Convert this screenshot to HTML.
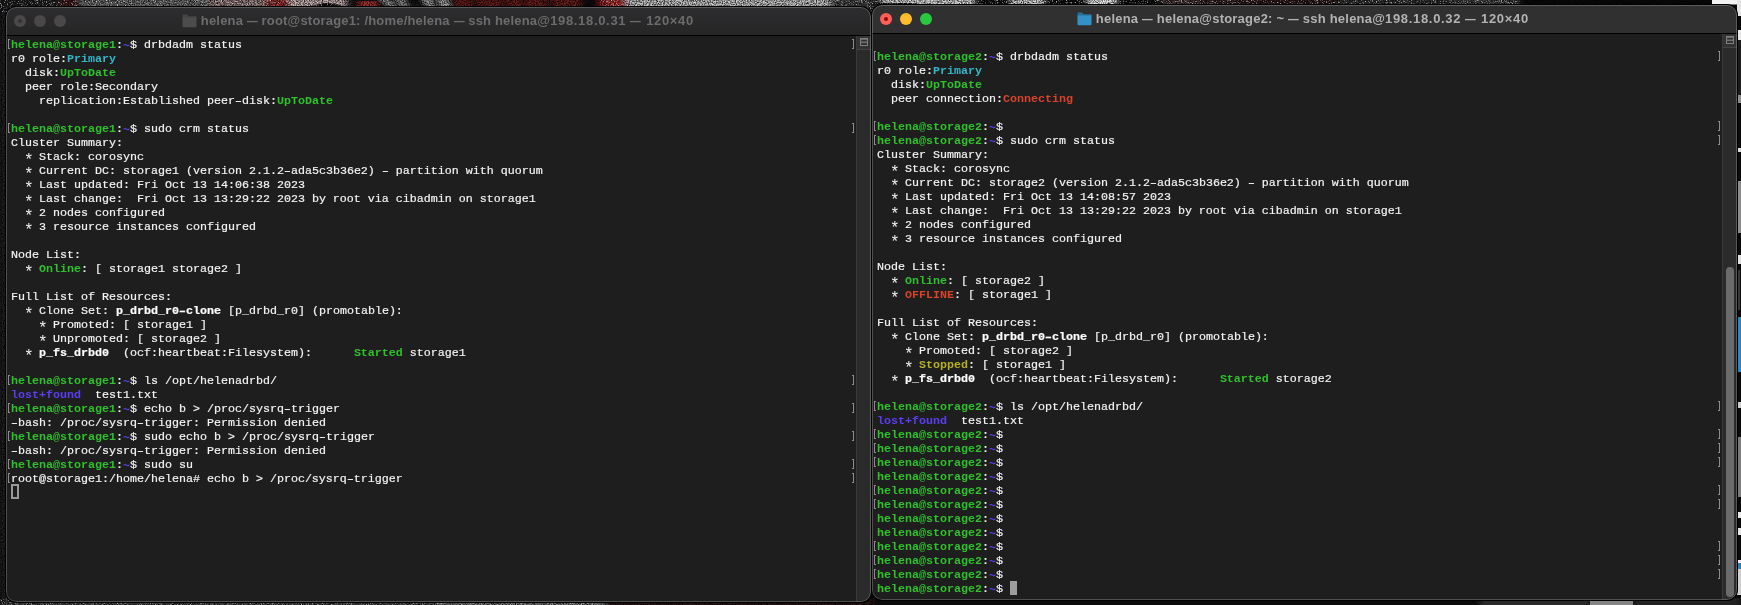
<!DOCTYPE html>
<html lang="en"><head><meta charset="utf-8"><title>Terminal — storage1 / storage2</title>
<style>
html,body{margin:0;padding:0}
body{width:1741px;height:605px;overflow:hidden;background:#0c0c0c;position:relative;font-family:"Liberation Sans",sans-serif}
#bg{position:absolute;left:0;top:0}
.win{position:absolute;width:865px;height:595px;border-radius:10px;background:#1e1e1e;overflow:hidden;box-shadow:0 0 0 1px #000}
.win::after{content:"";position:absolute;left:0;top:0;right:0;bottom:0;border-radius:10px;border:1px solid rgba(255,255,255,.22);pointer-events:none;box-sizing:border-box}
.w1{left:6px;top:7px}
.w2{left:872px;top:5px}
.tb{will-change:transform;position:absolute;left:0;top:0;width:100%;height:28px;border-bottom:1px solid #000}
.w1 .tb{background:linear-gradient(#2d2c2e,#262627)}
.w2 .tb{background:#303030}
.tl{position:absolute;top:8px;width:12px;height:12px;border-radius:50%;background:#4a4849}
.t1{left:8px}.t2{left:28px}.t3{left:48px}
.tl b{position:absolute;left:4px;top:4px;width:4px;height:4px;border-radius:50%;background:#353334}
.w2 .t1{background:#fe5f57}.w2 .t2{background:#febc2e}.w2 .t3{background:#28c840}
.w2 .t1 b{background:#8c0a05}
.ttl{position:absolute;top:0;height:28px;white-space:nowrap}
.w1 .ttl{left:176px}
.w2 .ttl{left:205px}
.fold{position:absolute;left:0;top:7px}
.w1 .f1{fill:#454546}.w1 .f2{fill:#4c4c4d}
.w2 .f1{fill:#256f9c}.w2 .f2{fill:#3391c5}
.tt{position:absolute;left:18.8px;top:0;line-height:28px;font-size:13px;font-weight:bold;white-space:pre}
.w1 .tt{color:#6c6c6d;letter-spacing:.185px}
.w2 .tt{color:#b3b3b3;letter-spacing:.213px}
.term{will-change:transform;position:absolute;left:0;top:29px;width:865px;height:566px;font-family:"Liberation Mono","DejaVu Sans Mono",monospace;font-size:11.667px;font-weight:normal;color:#f4f4f4}
.ln{position:absolute;left:5.1px;height:14px;line-height:14px;white-space:pre;margin-top:1px}
.w{-webkit-text-stroke:.18px #f4f4f4}
.g,.c,.b,.r,.y,.bd{font-weight:bold}
.g{color:#2fc02c}.c{color:#2fb7c9}.b{color:#5c3df6}.r{color:#d9432a}.y{color:#b6b024}
.bd{color:#fff;-webkit-text-stroke:.2px #fff}
.mk{position:absolute;width:1px;height:8px;border:1px solid #8c8c8c;box-sizing:content-box}
.mk.l{left:2px;border-right:none}
.mk.r{left:846px;border-left:none}
.cur{position:absolute;width:7px;height:14px;box-sizing:border-box}
.cur.hollow{border:2px solid #999;width:8px;height:15px}
.cur.solid{background:#9d9d9d}
.sb{position:absolute;right:0;top:0;width:15px;height:566px;background:#2b2b2b;border-left:1px solid #3a3a3a;box-sizing:border-box}
.sp{position:absolute;left:0;top:0;width:14px;height:13px;border-bottom:1px solid #444;background:#333}
.sp svg{position:absolute;left:3px;top:2px}
.th{position:absolute;left:3px;top:233px;width:8px;height:330px;border-radius:4px;background:#6b6b6b}
.em{display:inline-block;transform:scaleX(.82);transform-origin:0 50%;margin-right:-2.3px}
.tn{letter-spacing:.67px}
.as{display:inline-block;width:7px;height:10px;line-height:10px;font-size:16px;position:relative;top:4.7px;left:-1px;vertical-align:baseline;-webkit-text-stroke:0}
.hy{display:inline-block;transform:scaleX(1.55)}
.bt{position:relative;top:1px}

</style></head>
<body>
<svg id="bg" width="1741" height="605" viewBox="0 0 1741 605">
<defs>
<filter id="nk" x="0" y="0" width="100%" height="100%"><feTurbulence type="fractalNoise" baseFrequency="0.85" numOctaves="2" seed="4"/><feColorMatrix type="matrix" values="0 0 0 0 0  0 0 0 0 0  0 0 0 0 0  2.2 0 0 0 -0.8"/></filter>
<filter id="nw" x="0" y="0" width="100%" height="100%"><feTurbulence type="fractalNoise" baseFrequency="0.8" numOctaves="2" seed="11"/><feColorMatrix type="matrix" values="0 0 0 0 1  0 0 0 0 1  0 0 0 0 1  0 2.4 0 0 -1.3"/></filter>
<filter id="bl" x="-2%" y="-50%" width="104%" height="200%"><feGaussianBlur stdDeviation="3 0.6"/></filter>
</defs>
<rect width="1741" height="605" fill="#0a0a0a"/>
<g filter="url(#bl)">
<rect x="0" y="0" width="60" height="12" fill="#1b1b1b"/>
<rect x="60" y="0" width="20" height="12" fill="#3c1414"/>
<rect x="80" y="0" width="130" height="12" fill="#626262"/>
<rect x="210" y="0" width="55" height="12" fill="#8e7474"/>
<rect x="265" y="0" width="25" height="12" fill="#8a2222"/>
<rect x="290" y="0" width="55" height="12" fill="#c4acac"/>
<ellipse cx="327" cy="8" rx="17" ry="5" fill="#0a0a0a"/>
<rect x="345" y="0" width="110" height="12" fill="#141414"/>
<rect x="360" y="1" width="16" height="6" fill="#b03030"/>
<path d="M383 0l8 7h3l-6 -7zM398 0l5 7h3l-4 -7zM425 0l4 7h4l-3 -7zM440 0l3 7h5l-2 -7z" fill="#d8d8d8"/>
<rect x="455" y="0" width="125" height="12" fill="#6a1a1c"/>
<path d="M470 0l4 7h5l-3 -7zM500 0l5 7h4l-4 -7zM520 0l3 7h3l-2 -7zM545 0l3 7h6l-2 -7z" fill="#0c0c0c"/>
<rect x="580" y="0" width="20" height="12" fill="#0c0c0c"/>
<rect x="600" y="0" width="26" height="12" fill="#a42424"/>
<rect x="626" y="0" width="204" height="12" fill="#bcbcbc"/>
<rect x="830" y="0" width="44" height="12" fill="#3a3a3a"/>
<rect x="880" y="0" width="35" height="3" fill="#c8c8c8"/>
<rect x="915" y="0" width="60" height="4" fill="#d4d4d4"/>
<rect x="1010" y="0" width="35" height="4" fill="#d0d0d0"/>
<rect x="1087" y="0" width="30" height="4" fill="#ececec"/>
<rect x="1160" y="0" width="40" height="5" fill="#3a2c2c"/>
<rect x="1200" y="0" width="140" height="5" fill="#2a1212"/>
<rect x="1340" y="0" width="110" height="5" fill="#2c2c2c"/>
<rect x="1450" y="0" width="70" height="5" fill="#383838"/>
<rect x="0" y="12" width="8" height="593" fill="#272727"/>
<rect x="0" y="598" width="435" height="7" fill="#3e3e3e"/>
<rect x="435" y="598" width="170" height="7" fill="#6a6a6a"/>
<rect x="605" y="598" width="268" height="7" fill="#2c1416"/>
<rect x="1480" y="598" width="110" height="7" fill="#2a2a2a"/>
<rect x="1633" y="598" width="108" height="7" fill="#242424"/>
</g>
<rect x="0" y="0" width="1741" height="12" filter="url(#nk)"/>
<rect x="0" y="12" width="8" height="593" filter="url(#nk)"/>
<rect x="0" y="597" width="873" height="8" filter="url(#nk)"/>
<rect x="0" y="0" width="345" height="12" filter="url(#nw)"/>
<rect x="600" y="0" width="920" height="12" filter="url(#nw)"/>
<rect x="0" y="597" width="605" height="8" filter="url(#nw)"/>
<rect x="1590" y="600" width="43" height="5" fill="#858585"/>
<rect x="1712" y="0" width="29" height="4.5" fill="#f2f2f2"/>
<g>
<rect x="1737" y="0" width="4" height="16" fill="#e4e4e4"/>
<rect x="1738" y="30" width="3" height="10" fill="#e6e6e6"/>
<rect x="1737" y="40" width="4" height="55" fill="#1c1c1c"/>
<rect x="1737" y="95" width="4" height="8" fill="#8e8e8e"/>
<rect x="1738" y="148" width="3" height="4" fill="#ddd"/>
<rect x="1737" y="181" width="4" height="52" fill="#8c8c8c"/>
<rect x="1738" y="255" width="3" height="9" fill="#e0e0e0"/>
<rect x="1738" y="270" width="2" height="40" fill="#3a3a3a"/>
<rect x="1737" y="317" width="4" height="55" fill="#2a86c4"/>
<rect x="1738" y="402" width="3" height="6" fill="#ccc"/>
<rect x="1737" y="437" width="4" height="60" fill="#7c7c7c"/>
<rect x="1738" y="512" width="3" height="6" fill="#e8e8e8"/>
<rect x="1738" y="528" width="3" height="7" fill="#e8e8e8"/>
<rect x="1737" y="560" width="4" height="3" fill="#f0f0f0"/>
<rect x="1737" y="563" width="4" height="6" fill="#2a7fc0"/>
<rect x="1737" y="569" width="4" height="26" fill="#cfcfcf"/>
</g>
</svg>

<div class="win w1">
<div class="tb"><span class="tl t1"><b></b></span><span class="tl t2"></span><span class="tl t3"></span>
<div class="ttl"><svg class="fold" width="15" height="14" viewBox="0 0 15 14"><path class="f1" d="M0.5 1.6 Q0.5 0.6 1.5 0.6 H5 L6.6 2.2 H13.5 Q14.5 2.2 14.5 3.2 V5 H0.5 Z"/><path class="f2" d="M0.5 3.6 H14.5 V12.2 Q14.5 13.2 13.5 13.2 H1.5 Q0.5 13.2 0.5 12.2 Z"/></svg><span class="tt"><span class="ta">helena <span class="em">—</span> root@storage1: /home/helena <span class="em">—</span> ssh helena@</span><span class="tn">198.18.0.31 <span class="em">—</span> 120×40</span></span></div></div>
<div class="term">
<div class="ln" style="top:1px"><span class="g">helena@storage1</span><span class="w">:</span><span class="b bt">~</span><span class="w">$ drbdadm status</span></div>
<div class="ln" style="top:15px"><span class="w">r0 role:</span><span class="c">Primary</span></div>
<div class="ln" style="top:29px"><span class="w">  disk:</span><span class="g">UpToDate</span></div>
<div class="ln" style="top:43px"><span class="w">  peer role:Secondary</span></div>
<div class="ln" style="top:57px"><span class="w">    replication:Established peer<span class="hy">-</span>disk:</span><span class="g">UpToDate</span></div>
<div class="ln" style="top:85px"><span class="g">helena@storage1</span><span class="w">:</span><span class="b bt">~</span><span class="w">$ sudo crm status</span></div>
<div class="ln" style="top:99px"><span class="w">Cluster Summary:</span></div>
<div class="ln" style="top:113px"><span class="w">  <span class="as">*</span> Stack: corosync</span></div>
<div class="ln" style="top:127px"><span class="w">  <span class="as">*</span> Current DC: storage1 (version 2.1.2<span class="hy">-</span>ada5c3b36e2) <span class="hy">-</span> partition with quorum</span></div>
<div class="ln" style="top:141px"><span class="w">  <span class="as">*</span> Last updated: Fri Oct 13 14:06:38 2023</span></div>
<div class="ln" style="top:155px"><span class="w">  <span class="as">*</span> Last change:  Fri Oct 13 13:29:22 2023 by root via cibadmin on storage1</span></div>
<div class="ln" style="top:169px"><span class="w">  <span class="as">*</span> 2 nodes configured</span></div>
<div class="ln" style="top:183px"><span class="w">  <span class="as">*</span> 3 resource instances configured</span></div>
<div class="ln" style="top:211px"><span class="w">Node List:</span></div>
<div class="ln" style="top:225px"><span class="w">  <span class="as">*</span> </span><span class="g">Online</span><span class="w">: [ storage1 storage2 ]</span></div>
<div class="ln" style="top:253px"><span class="w">Full List of Resources:</span></div>
<div class="ln" style="top:267px"><span class="w">  <span class="as">*</span> Clone Set: </span><span class="bd">p_drbd_r0<span class="hy">-</span>clone</span><span class="w"> [p_drbd_r0] (promotable):</span></div>
<div class="ln" style="top:281px"><span class="w">    <span class="as">*</span> Promoted: [ storage1 ]</span></div>
<div class="ln" style="top:295px"><span class="w">    <span class="as">*</span> Unpromoted: [ storage2 ]</span></div>
<div class="ln" style="top:309px"><span class="w">  <span class="as">*</span> </span><span class="bd">p_fs_drbd0</span><span class="w">  (ocf:heartbeat:Filesystem):      </span><span class="g">Started</span><span class="w"> storage1</span></div>
<div class="ln" style="top:337px"><span class="g">helena@storage1</span><span class="w">:</span><span class="b bt">~</span><span class="w">$ ls /opt/helenadrbd/</span></div>
<div class="ln" style="top:351px"><span class="b">lost+found</span><span class="w">  test1.txt</span></div>
<div class="ln" style="top:365px"><span class="g">helena@storage1</span><span class="w">:</span><span class="b bt">~</span><span class="w">$ echo b &gt; /proc/sysrq<span class="hy">-</span>trigger</span></div>
<div class="ln" style="top:379px"><span class="w"><span class="hy">-</span>bash: /proc/sysrq<span class="hy">-</span>trigger: Permission denied</span></div>
<div class="ln" style="top:393px"><span class="g">helena@storage1</span><span class="w">:</span><span class="b bt">~</span><span class="w">$ sudo echo b &gt; /proc/sysrq<span class="hy">-</span>trigger</span></div>
<div class="ln" style="top:407px"><span class="w"><span class="hy">-</span>bash: /proc/sysrq<span class="hy">-</span>trigger: Permission denied</span></div>
<div class="ln" style="top:421px"><span class="g">helena@storage1</span><span class="w">:</span><span class="b bt">~</span><span class="w">$ sudo su</span></div>
<div class="ln" style="top:435px"><span class="w">root@storage1:/home/helena# echo b &gt; /proc/sysrq<span class="hy">-</span>trigger</span></div>
<i class="mk l" style="top:3px"></i><i class="mk r" style="top:3px"></i>
<i class="mk l" style="top:87px"></i><i class="mk r" style="top:87px"></i>
<i class="mk l" style="top:339px"></i><i class="mk r" style="top:339px"></i>
<i class="mk l" style="top:367px"></i><i class="mk r" style="top:367px"></i>
<i class="mk l" style="top:395px"></i><i class="mk r" style="top:395px"></i>
<i class="mk l" style="top:423px"></i><i class="mk r" style="top:423px"></i>
<i class="mk l" style="top:437px"></i><i class="mk r" style="top:437px"></i>
<div class="cur hollow" style="left:5px;top:448px"></div>
<div class="sb"><div class="sp"><svg width="8" height="8" viewBox="0 0 8 8"><rect x="0.5" y="0.5" width="7" height="7" fill="none" stroke="#808080"/><rect x="0" y="0" width="8" height="1.7" fill="#808080"/><rect x="0" y="3.6" width="8" height="1.2" fill="#808080"/></svg></div></div>
</div>
</div>
<div class="win w2">
<div class="tb"><span class="tl t1"><b></b></span><span class="tl t2"></span><span class="tl t3"></span>
<div class="ttl"><svg class="fold" width="15" height="14" viewBox="0 0 15 14"><path class="f1" d="M0.5 1.6 Q0.5 0.6 1.5 0.6 H5 L6.6 2.2 H13.5 Q14.5 2.2 14.5 3.2 V5 H0.5 Z"/><path class="f2" d="M0.5 3.6 H14.5 V12.2 Q14.5 13.2 13.5 13.2 H1.5 Q0.5 13.2 0.5 12.2 Z"/></svg><span class="tt"><span class="ta">helena <span class="em">—</span> helena@storage2: ~ <span class="em">—</span> ssh helena@</span><span class="tn">198.18.0.32 <span class="em">—</span> 120×40</span></span></div></div>
<div class="term">
<div class="ln" style="top:15px"><span class="g">helena@storage2</span><span class="w">:</span><span class="b bt">~</span><span class="w">$ drbdadm status</span></div>
<div class="ln" style="top:29px"><span class="w">r0 role:</span><span class="c">Primary</span></div>
<div class="ln" style="top:43px"><span class="w">  disk:</span><span class="g">UpToDate</span></div>
<div class="ln" style="top:57px"><span class="w">  peer connection:</span><span class="r">Connecting</span></div>
<div class="ln" style="top:85px"><span class="g">helena@storage2</span><span class="w">:</span><span class="b bt">~</span><span class="w">$ </span></div>
<div class="ln" style="top:99px"><span class="g">helena@storage2</span><span class="w">:</span><span class="b bt">~</span><span class="w">$ sudo crm status</span></div>
<div class="ln" style="top:113px"><span class="w">Cluster Summary:</span></div>
<div class="ln" style="top:127px"><span class="w">  <span class="as">*</span> Stack: corosync</span></div>
<div class="ln" style="top:141px"><span class="w">  <span class="as">*</span> Current DC: storage2 (version 2.1.2<span class="hy">-</span>ada5c3b36e2) <span class="hy">-</span> partition with quorum</span></div>
<div class="ln" style="top:155px"><span class="w">  <span class="as">*</span> Last updated: Fri Oct 13 14:08:57 2023</span></div>
<div class="ln" style="top:169px"><span class="w">  <span class="as">*</span> Last change:  Fri Oct 13 13:29:22 2023 by root via cibadmin on storage1</span></div>
<div class="ln" style="top:183px"><span class="w">  <span class="as">*</span> 2 nodes configured</span></div>
<div class="ln" style="top:197px"><span class="w">  <span class="as">*</span> 3 resource instances configured</span></div>
<div class="ln" style="top:225px"><span class="w">Node List:</span></div>
<div class="ln" style="top:239px"><span class="w">  <span class="as">*</span> </span><span class="g">Online</span><span class="w">: [ storage2 ]</span></div>
<div class="ln" style="top:253px"><span class="w">  <span class="as">*</span> </span><span class="r">OFFLINE</span><span class="w">: [ storage1 ]</span></div>
<div class="ln" style="top:281px"><span class="w">Full List of Resources:</span></div>
<div class="ln" style="top:295px"><span class="w">  <span class="as">*</span> Clone Set: </span><span class="bd">p_drbd_r0<span class="hy">-</span>clone</span><span class="w"> [p_drbd_r0] (promotable):</span></div>
<div class="ln" style="top:309px"><span class="w">    <span class="as">*</span> Promoted: [ storage2 ]</span></div>
<div class="ln" style="top:323px"><span class="w">    <span class="as">*</span> </span><span class="y">Stopped</span><span class="w">: [ storage1 ]</span></div>
<div class="ln" style="top:337px"><span class="w">  <span class="as">*</span> </span><span class="bd">p_fs_drbd0</span><span class="w">  (ocf:heartbeat:Filesystem):      </span><span class="g">Started</span><span class="w"> storage2</span></div>
<div class="ln" style="top:365px"><span class="g">helena@storage2</span><span class="w">:</span><span class="b bt">~</span><span class="w">$ ls /opt/helenadrbd/</span></div>
<div class="ln" style="top:379px"><span class="b">lost+found</span><span class="w">  test1.txt</span></div>
<div class="ln" style="top:393px"><span class="g">helena@storage2</span><span class="w">:</span><span class="b bt">~</span><span class="w">$ </span></div>
<div class="ln" style="top:407px"><span class="g">helena@storage2</span><span class="w">:</span><span class="b bt">~</span><span class="w">$ </span></div>
<div class="ln" style="top:421px"><span class="g">helena@storage2</span><span class="w">:</span><span class="b bt">~</span><span class="w">$ </span></div>
<div class="ln" style="top:435px"><span class="g">helena@storage2</span><span class="w">:</span><span class="b bt">~</span><span class="w">$ </span></div>
<div class="ln" style="top:449px"><span class="g">helena@storage2</span><span class="w">:</span><span class="b bt">~</span><span class="w">$ </span></div>
<div class="ln" style="top:463px"><span class="g">helena@storage2</span><span class="w">:</span><span class="b bt">~</span><span class="w">$ </span></div>
<div class="ln" style="top:477px"><span class="g">helena@storage2</span><span class="w">:</span><span class="b bt">~</span><span class="w">$ </span></div>
<div class="ln" style="top:491px"><span class="g">helena@storage2</span><span class="w">:</span><span class="b bt">~</span><span class="w">$ </span></div>
<div class="ln" style="top:505px"><span class="g">helena@storage2</span><span class="w">:</span><span class="b bt">~</span><span class="w">$ </span></div>
<div class="ln" style="top:519px"><span class="g">helena@storage2</span><span class="w">:</span><span class="b bt">~</span><span class="w">$ </span></div>
<div class="ln" style="top:533px"><span class="g">helena@storage2</span><span class="w">:</span><span class="b bt">~</span><span class="w">$ </span></div>
<div class="ln" style="top:547px"><span class="g">helena@storage2</span><span class="w">:</span><span class="b bt">~</span><span class="w">$ </span></div>
<i class="mk l" style="top:17px"></i><i class="mk r" style="top:17px"></i>
<i class="mk l" style="top:87px"></i><i class="mk r" style="top:87px"></i>
<i class="mk l" style="top:101px"></i><i class="mk r" style="top:101px"></i>
<i class="mk l" style="top:367px"></i><i class="mk r" style="top:367px"></i>
<i class="mk l" style="top:395px"></i><i class="mk r" style="top:395px"></i>
<i class="mk l" style="top:409px"></i><i class="mk r" style="top:409px"></i>
<i class="mk l" style="top:423px"></i><i class="mk r" style="top:423px"></i>
<i class="mk l" style="top:451px"></i><i class="mk r" style="top:451px"></i>
<i class="mk l" style="top:465px"></i><i class="mk r" style="top:465px"></i>
<i class="mk l" style="top:507px"></i><i class="mk r" style="top:507px"></i>
<i class="mk l" style="top:521px"></i><i class="mk r" style="top:521px"></i>
<i class="mk l" style="top:535px"></i><i class="mk r" style="top:535px"></i>
<div class="cur solid" style="left:138px;top:547px"></div>
<div class="sb"><div class="sp"><svg width="8" height="8" viewBox="0 0 8 8"><rect x="0.5" y="0.5" width="7" height="7" fill="none" stroke="#808080"/><rect x="0" y="0" width="8" height="1.7" fill="#808080"/><rect x="0" y="3.6" width="8" height="1.2" fill="#808080"/></svg></div><div class="th"></div></div>
</div>
</div>
</body></html>
